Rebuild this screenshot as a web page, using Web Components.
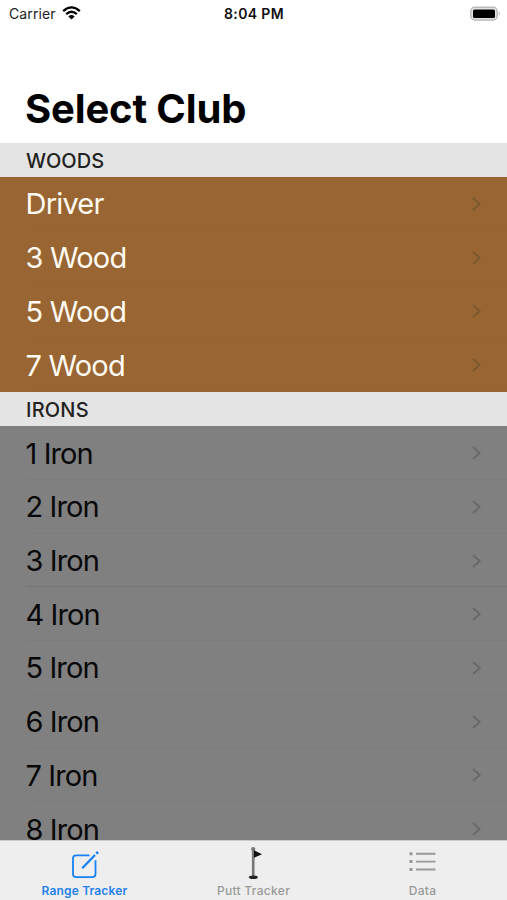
<!DOCTYPE html>
<html lang="en">
<head>
<meta charset="utf-8">
<title>Select Club</title>
<style>
html, body { margin: 0; height: 100%; overflow: hidden; background: #fff; }
body { font-family: Inter, "Liberation Sans", sans-serif; }
</style>
</head>
<body>
<club-app></club-app>
<script>
const define = (name, render) => customElements.define(name, class extends HTMLElement {
  connectedCallback() {
    if (this.shadowRoot) return;
    this.attachShadow({ mode: 'open' }).innerHTML = render(this);
  }
});

define('status-bar', () => `
<style>
:host { display: grid; grid-template-columns: 1fr auto 1fr; align-items: center; height: 28px; padding: 0 6px 0 9px; box-sizing: border-box; font-size: 14px; color: #222; }
.left { display: flex; align-items: center; gap: 6px; letter-spacing: .1px; margin-top: -2px; }
.time { font-weight: 600; font-size: 14px; letter-spacing: .35px; color: #111; margin-left: -2px; margin-top: -1px; }
.battery { justify-self: end; display: block; margin-top: -1px; }
svg { display: block; }
</style>
<div class="left"><span>Carrier</span>
<svg width="19" height="14" viewBox="0 0 19 14" fill="none" stroke="#000" stroke-width="2.3"><path d="M1.2 5.1Q9.5-2.4 17.8 5.1M4.2 8.2Q9.5 3.4 14.8 8.2"/><path d="M6.4 10.4Q9.5 7.6 12.6 10.4L9.5 13.6Z" fill="#000" stroke="none"/></svg></div>
<span class="time">8:04 PM</span>
<svg class="battery" width="31" height="16" viewBox="0 0 31 16"><rect x=".8" y="1.3" width="26.4" height="12.6" rx="4" fill="#e4e4e4" stroke="#bbb" stroke-width="1.5"/><rect x="3" y="3.4" width="22" height="8.6" rx="1.5"/><path d="M28.7 5.4Q31 7.6 28.7 9.8Z" fill="#b4b4b4"/></svg>`);

define('page-title', () => `
<style>
:host { display: flex; align-items: flex-end; height: 115px; padding: 0 0 9px 25px; box-sizing: border-box; font-size: 40px; font-weight: 700; line-height: 50px; letter-spacing: -.15px; color: #000; }
</style><slot></slot>`);

define('club-section', el => `
<style>
:host { display: block; background: var(--section-bg); color: var(--section-fg); }
h2 { margin: 0; height: 34.2px; line-height: 37px; padding-left: 26px; background: #e4e4e4; color: #222; font-size: 20px; font-weight: 500; letter-spacing: var(--head-spacing, 0); }
</style><h2>${el.getAttribute('heading')}</h2><slot></slot>`);

define('club-row', () => `
<style>
:host { display: flex; align-items: center; justify-content: space-between; height: 53.73px; box-sizing: border-box; padding: 0 25.5px 0 25.5px; font-size: 29px; letter-spacing: var(--row-spacing); background: linear-gradient(var(--line), var(--line)) 26px 100% / 100% 1px no-repeat; }
:host([ruled]) { --line: #747474; }
svg { display: block; fill: none; stroke: var(--chevron); stroke-width: 1.9; }
span { margin-top: -.2px; }
</style><span><slot></slot></span>
<svg width="11" height="16" viewBox="0 0 11 16"><path d="M2 2L8.7 8L2 14"/></svg>`);

define('tab-item', el => `
<style>
:host { display: flex; flex: 1; flex-direction: column; align-items: center; color: #999; font-size: 12px; font-weight: 500; line-height: 16px; letter-spacing: .3px; }
:host([active]) { color: #2582ed; font-weight: 600; letter-spacing: .15px; }
.icon { height: 43px; display: flex; align-items: flex-start; }
</style><div class="icon"><slot name="icon"></slot></div><span><slot></slot></span>`);

define('tab-bar', () => `
<style>
:host { position: absolute; left: 0; right: 0; bottom: 0; height: 60px; display: flex; background: #eee; box-shadow: inset 0 1px #cacaca; }
</style><slot></slot>`);

define('club-app', () => {
  const rows = (names) => names.map(n => `<club-row${n === '3 Iron' ? ' ruled' : ''}>${n}</club-row>`).join('');
  return `
<style>
:host { display: block; position: relative; width: 507px; height: 900px; overflow: hidden; background: #fff; }
.woods { --section-bg: #996633; --section-fg: #fffaf2; --line: #966432; --chevron: #7b592f; --head-spacing: .05px; --row-spacing: -.8px; }
.irons { --section-bg: #808080; --section-fg: #080808; --line: #7c7c7c; --chevron: #686868; --head-spacing: .2px; --row-spacing: -.9px; }
svg { display: block; }
</style>
<status-bar></status-bar>
<page-title>Select Club</page-title>
<club-section class="woods" heading="WOODS">${rows(['Driver', '3 Wood', '5 Wood', '7 Wood'])}</club-section>
<club-section class="irons" heading="IRONS">${rows([1, 2, 3, 4, 5, 6, 7, 8].map(n => n + ' Iron'))}</club-section>
<tab-bar>
<tab-item active><svg slot="icon" width="30" height="42" viewBox="0 0 30 42" fill="none" stroke="#1780f5" stroke-width="1.8"><path d="M19.5 15.3H6.2Q3 15.3 3 18.5V34Q3 37.2 6.2 37.2H22.3Q25.5 37.2 25.5 34V20.2"/><path d="M12.2 28.3L25 15" stroke-width="2.3"/><path d="M26.3 13.7L28 12" stroke-width="2.6"/></svg>Range Tracker</tab-item>
<tab-item><svg slot="icon" width="16" height="42" viewBox="0 0 16 42"><path d="M7.2 9V37" stroke="#777" stroke-width="2.6"/><circle cx="7.2" cy="9" r="2.1" fill="#777"/><path d="M8 10.3L16 14.2L8 17.8Z" fill="#111"/><ellipse cx="7.3" cy="37.3" rx="4.5" ry="1.8" fill="#222"/></svg>Putt Tracker</tab-item>
<tab-item><svg slot="icon" width="27" height="42" viewBox="0 0 27 42" fill="#999"><path d="M.5 12.2h3v3h-3zM.5 20.1h3v3h-3zM.5 28h3v3h-3zM7 12.8h19.5v1.9H7zM7 20.7h19.5v1.9H7zM7 28.6h19.5v1.9H7z"/></svg>Data</tab-item>
</tab-bar>`;
});
</script>
</body>
</html>
